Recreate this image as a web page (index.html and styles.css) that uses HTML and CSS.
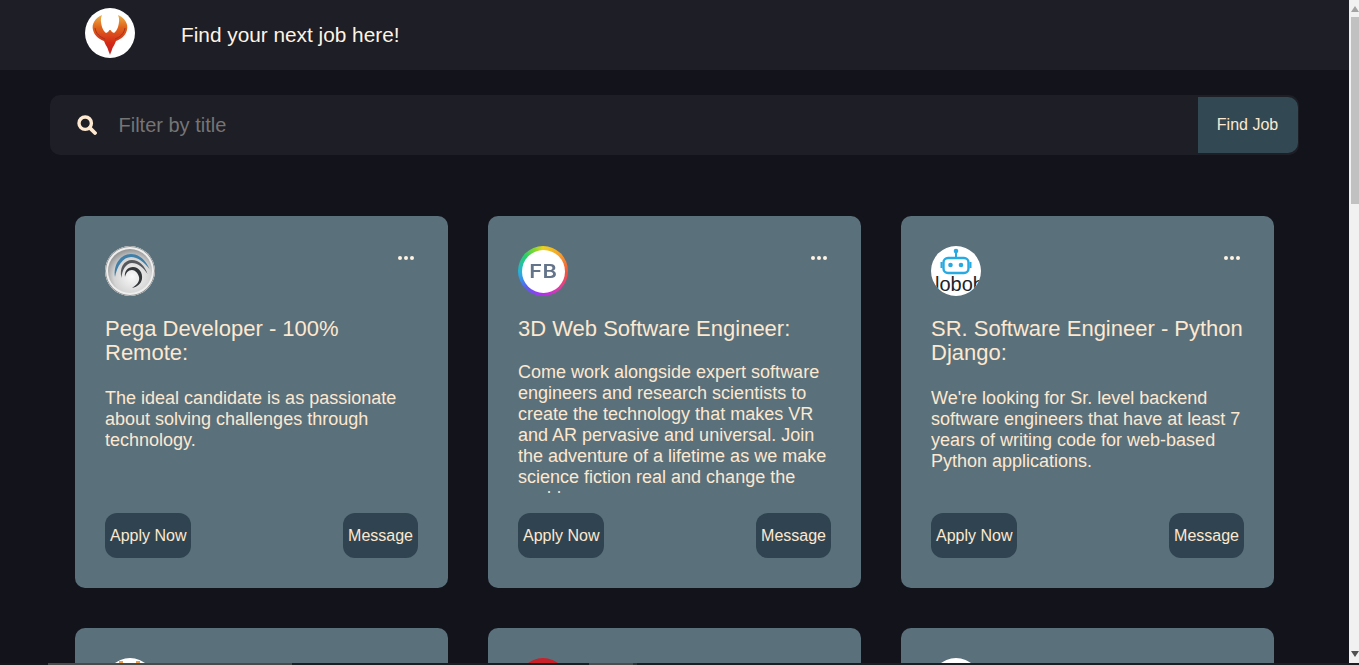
FILE: index.html
```html
<!DOCTYPE html>
<html lang="en">
<head>
<meta charset="utf-8">
<title>Find your next job here!</title>
<link rel="stylesheet" href="styles.css">
</head>
<body>
<div class="window">
  <div class="viewport">
    <main class="page">
      <header class="topbar">
        <div class="avatar brand-logo">
          <svg viewBox="0 0 50 50" width="50" height="50">
            <defs>
              <linearGradient id="ph" x1="0" y1="0" x2="0" y2="1">
                <stop offset="0" stop-color="#e9b04a"/>
                <stop offset="0.3" stop-color="#e0661c"/>
                <stop offset="0.7" stop-color="#d32a18"/>
                <stop offset="0.9" stop-color="#c8201c"/>
                <stop offset="1" stop-color="#9a6a6a"/>
              </linearGradient>
              <filter id="soft"><feGaussianBlur stdDeviation="0.45"/></filter>
            </defs>
            <g filter="url(#soft)">
              <path fill="url(#ph)" d="M17 7C10 10 6.500 16 8 22C9.500 28 14 31 19 33C20 36 21.500 38 22.500 40L23.500 43L25 47L26.500 43L27.500 40C28.500 38 30 36 31 33C36 31 40.500 28 42 22C43.500 16 40 10 33 7C35 11 34 15 33 19C32 22 30.500 24 29 25L27 24L25.500 22L24.500 22L23 24L21 25C19.500 24 18 22 17 19C16 15 15 11 17 7Z"/>
              <path fill="none" stroke="#a5331a" stroke-width="1" d="M10 20C11 26 15 29 20 31M40 20C39 26 35 29 30 31"/>
            </g>
          </svg>
        </div>
        <h1 class="tagline">Find your next job here!</h1>
      </header>

      <form class="search">
        <svg class="search-icon" viewBox="0 0 20 20" width="20" height="20">
          <circle cx="8.200" cy="8.200" r="6.200" fill="none" stroke="currentColor" stroke-width="3.400"/>
          <path d="M12.800 12.800L18 18" fill="none" stroke="currentColor" stroke-width="3.800" stroke-linecap="round"/>
        </svg>
        <input class="search-input" type="text" placeholder="Filter by title">
        <button class="search-btn" type="button">Find Job</button>
      </form>

      <section class="grid">
        <article class="card">
          <div class="card-top">
            <div class="avatar swirl">
              <svg viewBox="0 0 50 50" width="50" height="50">
                <defs>
                  <radialGradient id="sw" cx="0.55" cy="0.62" r="0.6">
                    <stop offset="0" stop-color="#fafafa"/>
                    <stop offset="0.7" stop-color="#d4d4d4"/>
                    <stop offset="1" stop-color="#9a9a9a"/>
                  </radialGradient>
                </defs>
                <circle cx="25" cy="25" r="25" fill="#8f8f8f"/>
                <circle cx="25" cy="25" r="24" fill="#eeeeee"/>
                <circle cx="25" cy="25" r="22" fill="url(#sw)"/>
                <path d="M10 31C8 18 16 8 26 8C35 8 41 15 44.500 23C39 16 33 11 26 11C18 11 12 20 10 31Z" fill="#3f7fa8"/>
                <path d="M16.500 32C14 22 19 14 27 14C34 14 40 20 42.500 28C38 21 33 17 27 17C21 17 17 24 16.500 32Z" fill="#55585c"/>
                <path d="M20 31C19 25 23 21 28 21C34 21 38 27 37 33C36 38 32 41 27 42C32 39 35 35 34 31C33 27 30 24 27 24C23 24 21 27 20 31Z" fill="#34373a"/>
              </svg>
            </div>
            <button class="dots" type="button" aria-label="More"><i></i><i></i><i></i></button>
          </div>
          <h2 class="title title-wrap">Pega Developer - 100% Remote:</h2>
          <p class="desc">The ideal candidate is as passionate about solving challenges through technology.</p>
          <div class="actions">
            <button class="btn" type="button">Apply Now</button>
            <button class="btn" type="button">Message</button>
          </div>
        </article>

        <article class="card">
          <div class="card-top">
            <div class="avatar fb"><span class="fb-inner"><span class="fb-text">FB</span></span></div>
            <button class="dots" type="button" aria-label="More"><i></i><i></i><i></i></button>
          </div>
          <h2 class="title">3D Web Software Engineer:</h2>
          <p class="desc">Come work alongside expert software engineers and research scientists to create the technology that makes VR and AR pervasive and universal. Join the adventure of a lifetime as we make science fiction real and change the world.</p>
          <div class="actions">
            <button class="btn" type="button">Apply Now</button>
            <button class="btn" type="button">Message</button>
          </div>
        </article>

        <article class="card">
          <div class="card-top">
            <div class="avatar lobob">
              <svg class="robot" viewBox="0 0 50 50" width="50" height="50">
                <circle cx="25" cy="5" r="2.300" fill="#27a9e1"/>
                <path d="M25 6v6" stroke="#27a9e1" stroke-width="2"/>
                <rect x="12.500" y="12" width="25" height="15" rx="4.500" fill="none" stroke="#27a9e1" stroke-width="2.400"/>
                <circle cx="19.500" cy="19" r="2.300" fill="#27a9e1"/>
                <circle cx="30" cy="19" r="2.300" fill="#27a9e1"/>
                <path d="M10.500 16v6M39.500 16v6" stroke="#27a9e1" stroke-width="2"/>
              </svg>
              <span class="lobob-word">lobob</span>
            </div>
            <button class="dots" type="button" aria-label="More"><i></i><i></i><i></i></button>
          </div>
          <h2 class="title title-wrap">SR. Software Engineer - Python Django:</h2>
          <p class="desc">We're looking for Sr. level backend software engineers that have at least 7 years of writing code for web-based Python applications.</p>
          <div class="actions">
            <button class="btn" type="button">Apply Now</button>
            <button class="btn" type="button">Message</button>
          </div>
        </article>

        <article class="card">
          <div class="card-top"><div class="avatar peek-white"><i class="peek-mark"></i><i class="peek-mark"></i></div></div>
        </article>
        <article class="card">
          <div class="card-top"><div class="avatar peek-red"></div></div>
        </article>
        <article class="card">
          <div class="card-top"><div class="avatar"></div></div>
        </article>
      </section>
    </main>

    <div class="scrollbar" aria-hidden="true">
      <span class="arrow-up"></span>
      <span class="thumb"></span>
      <span class="arrow-down"></span>
    </div>
  </div>

  <div class="taskstrip" aria-hidden="true">
    <span class="seg-a"></span>
    <span class="seg-b"></span>
    <span class="seg-c"></span>
    <span class="seg-d"></span>
    <span class="seg-e"></span>
  </div>
</div>
</body>
</html>
```
FILE: styles.css
```css
* { box-sizing: border-box; }

html, body {
  margin: 0;
  height: 100%;
  overflow: hidden;
  background: #12131b;
}

body {
  font-family: "Liberation Sans", Arial, sans-serif;
  color: #fde8d0;
}

.window {
  display: flex;
  flex-direction: column;
  height: 100vh;
}

.viewport {
  flex: 1;
  min-height: 0;
  display: flex;
  overflow: hidden;
}

.page {
  flex: 1;
  min-width: 0;
  background: #12131b;
}

.topbar {
  height: 70px;
  background: #1d1e26;
  display: flex;
  padding: 8px 0 0 85px;
  gap: 46px;
}

.avatar {
  width: 50px;
  height: 50px;
  flex: none;
  border-radius: 50%;
  background: #fff;
  overflow: hidden;
  position: relative;
}

.avatar svg { display: block; }

.tagline {
  margin: 0;
  font-size: 20.8px;
  font-weight: 400;
  line-height: 24px;
  padding-top: 15px;
  color: #fff3e3;
}

.search {
  margin: 25px 50px 0;
  height: 60px;
  background: #1d1e26;
  border-radius: 10px;
  display: flex;
  align-items: center;
  padding: 2px 1px 2px 26.5px;
}

.search-icon {
  flex: none;
  color: #fde8d0;
}

.search-input {
  flex: 1;
  min-width: 0;
  border: 0;
  outline: 0;
  background: transparent;
  font: 20px "Liberation Sans", Arial, sans-serif;
  color: #fde8d0;
  padding: 0 0 0 22px;
  margin: 0;
}

.search-input::placeholder { color: #757575; opacity: 1; }

.search-btn {
  width: 100px;
  height: 56px;
  border: 0;
  border-radius: 0 10px 10px 0;
  background: #324853;
  color: #fde8d0;
  font: 16px "Liberation Sans", Arial, sans-serif;
  padding: 0 1px 0 0;
}

.grid {
  display: grid;
  grid-template-columns: repeat(3, 1fr);
  gap: 40px;
  margin-top: 61px;
  padding: 0 75px;
}

.card {
  height: 372px;
  background: #5a707b;
  border-radius: 10px;
  padding: 30px;
  display: flex;
  flex-direction: column;
}

.card-top {
  display: flex;
  justify-content: space-between;
  height: 50px;
  flex: none;
}

.dots {
  display: flex;
  gap: 2px;
  align-self: flex-start;
  margin: 10px 4px 0 0;
  padding: 0;
  border: 0;
  background: none;
}

.dots i {
  width: 4px;
  height: 4px;
  border-radius: 50%;
  background: #fff3e3;
}

.title {
  margin: 21px 0 0;
  font-size: 22px;
  font-weight: 400;
  line-height: 24px;
  color: #fde8d0;
  flex: none;
}

.title-wrap { margin-bottom: 2px; }

.desc {
  margin: 21px 0 20px;
  font-size: 18px;
  line-height: 21px;
  flex: 1;
  min-height: 0;
  overflow: hidden;
  color: #fde8d0;
}

.actions {
  display: flex;
  justify-content: space-between;
  flex: none;
}

.btn {
  height: 45px;
  padding: 0 5px;
  border: 0;
  border-radius: 12px;
  background: #2f4450;
  color: #fde8d0;
  font: 16px "Liberation Sans", Arial, sans-serif;
}

.fb {
  background: conic-gradient(#ecd21e 0deg, #f7a12a 45deg, #f2503c 95deg, #e53aa0 135deg, #b12ff0 180deg, #5a5cf0 225deg, #26b0e0 265deg, #27d06a 310deg, #8ad82a 340deg, #ecd21e 360deg);
  padding: 3.5px;
}

.fb-inner {
  display: flex;
  align-items: center;
  justify-content: center;
  width: 100%;
  height: 100%;
  border-radius: 50%;
  background: #fff;
  color: #64748a;
  font-family: Inter, "Liberation Sans", sans-serif;
  font-size: 19px;
  font-weight: 600;
}

.fb-text {
  display: inline-block;
  letter-spacing: 0.5px;
  transform: scaleX(1.15);
}

.lobob-word {
  position: absolute;
  left: 4px;
  top: 27px;
  font-size: 20px;
  line-height: 22px;
  color: #20242a;
}

.peek-white { display: flex; gap: 13px; padding: 2px 0 0 14px; }
.peek-mark { width: 4px; height: 2px; background: #eb9b4c; margin-top: 1px; }
.peek-red { background: #c9202a; }

.scrollbar {
  width: 10px;
  flex: none;
  background: #f1f1f1;
  display: flex;
  flex-direction: column;
  align-items: flex-end;
}

.thumb {
  width: 8px;
  height: 187px;
  background: #c1c1c1;
  margin-top: 5px;
}

.arrow-up {
  margin: 6px 0 0;
  width: 0;
  height: 0;
  border-left: 4px solid transparent;
  border-right: 4px solid transparent;
  border-bottom: 6px solid #a3a3a3;
}

.arrow-down {
  margin-top: auto;
  margin-bottom: 6px;
  width: 0;
  height: 0;
  border-left: 4px solid transparent;
  border-right: 4px solid transparent;
  border-top: 6px solid #505050;
}

.taskstrip {
  height: 2px;
  flex: none;
  display: flex;
  background: #1c1f22;
}

.seg-a { width: 48px; background: #16171c; }
.seg-b { width: 244px; background: #4a4a4a; }
.seg-c { width: 297px; background: #1c1f22; }
.seg-d { width: 48px; background: #4d4d4d; border-right: 4px solid #333; }
.seg-e { flex: 1; background: #1c1f22; }
```
